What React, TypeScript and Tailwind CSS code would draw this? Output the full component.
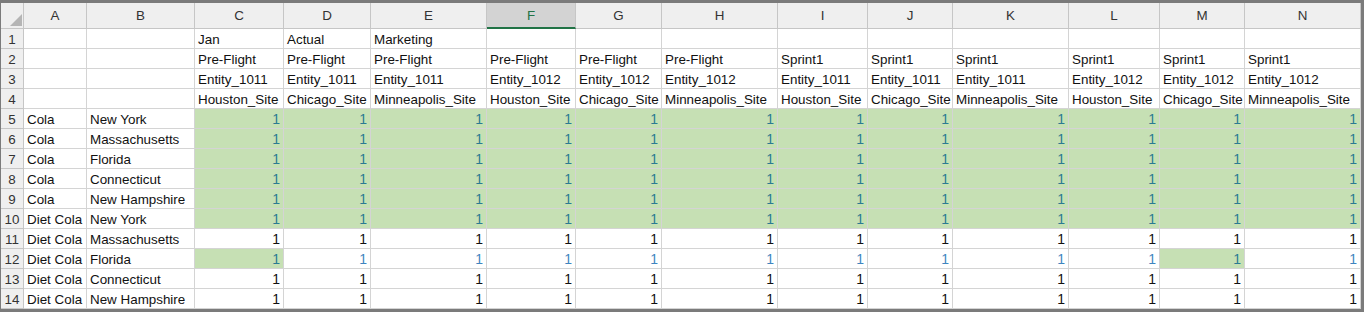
const cols = ["A", "B", "C", "D", "E", "F", "G", "H", "I", "J", "K", "L", "M", "N"];

const row1: Record<string, string> = { C: "Jan", D: "Actual", E: "Marketing" };
const scenarios = ["Pre-Flight", "Pre-Flight", "Pre-Flight", "Pre-Flight", "Pre-Flight", "Pre-Flight", "Sprint1", "Sprint1", "Sprint1", "Sprint1", "Sprint1", "Sprint1"];
const entities = ["Entity_1011", "Entity_1011", "Entity_1011", "Entity_1012", "Entity_1012", "Entity_1012", "Entity_1011", "Entity_1011", "Entity_1011", "Entity_1012", "Entity_1012", "Entity_1012"];
const sites = ["Houston_Site", "Chicago_Site", "Minneapolis_Site"];

const products = [
  ["Cola", "New York"],
  ["Cola", "Massachusetts"],
  ["Cola", "Florida"],
  ["Cola", "Connecticut"],
  ["Cola", "New Hampshire"],
  ["Diet Cola", "New York"],
  ["Diet Cola", "Massachusetts"],
  ["Diet Cola", "Florida"],
  ["Diet Cola", "Connecticut"],
  ["Diet Cola", "New Hampshire"],
];

function Cell({ children, right, fill, tone }: { children?: React.ReactNode; right?: boolean; fill?: boolean; tone?: "teal" | "blue" }) {
  const color = tone === "teal" ? "text-[#2a7a92]" : tone === "blue" ? "text-[#3f85bf]" : "text-[#111]";
  return (
    <div
      className={`h-5 flex items-end pb-[2px] px-[3px] whitespace-nowrap overflow-visible border-r border-b border-[#d4d4d4] leading-none ${right ? "justify-end text-[14px]" : "justify-start"} ${fill ? "bg-[#c6e0b4]" : "bg-white"} ${color}`}
    >
      {children}
    </div>
  );
}

function RowHead({ n }: { n: number }) {
  return (
    <div className="h-5 flex items-end justify-center pb-[2px] bg-[#efefef] border-r border-b border-[#c6c6c6] text-[#333] leading-none">
      {n}
    </div>
  );
}

export default function App() {
  return (
    <div className="w-[1364px] h-[312px] overflow-hidden bg-white border-t-[3px] border-l border-r-[3px] border-b-[3px] border-[#7b7b7b] text-[13.4px]" style={{ fontFamily: '"Liberation Sans", Arial, sans-serif' }}>
      <div className="grid grid-cols-[23px_63px_108px_89px_87px_116px_89px_86px_116px_90px_85px_116px_91px_85px_116px]">
        {/* column headers */}
        <div className="h-[26px] bg-[#efefef] border-r border-b border-[#c6c6c6] relative">
          <svg className="absolute left-[9px] top-[11px]" width="12" height="12" viewBox="0 0 12 12">
            <polygon points="12,0 12,12 0,12" fill="#b5b5b5" />
          </svg>
        </div>
        {cols.map((c) =>
          c === "F" ? (
            <div key={c} className="h-[26px] flex items-center justify-center bg-[#d3d3d3] border-r border-[#c6c6c6] border-b-2 border-b-[#217346] text-[#217346] pt-[2px]">
              {c}
            </div>
          ) : (
            <div key={c} className="h-[26px] flex items-center justify-center bg-[#efefef] border-r border-b border-[#c6c6c6] text-[#333] pt-[1px]">
              {c}
            </div>
          )
        )}

        {/* row 1 */}
        <RowHead n={1} />
        {cols.map((c) => (
          <Cell key={c}>{row1[c]}</Cell>
        ))}

        {/* row 2 */}
        <RowHead n={2} />
        <Cell />
        <Cell />
        {scenarios.map((s, i) => (
          <Cell key={i}>{s}</Cell>
        ))}

        {/* row 3 */}
        <RowHead n={3} />
        <Cell />
        <Cell />
        {entities.map((s, i) => (
          <Cell key={i}>{s}</Cell>
        ))}

        {/* row 4 */}
        <RowHead n={4} />
        <Cell />
        <Cell />
        {entities.map((_, i) => (
          <Cell key={i}>{sites[i % 3]}</Cell>
        ))}

        {/* data rows */}
        {products.map(([prod, state], r) => {
          const rowNum = r + 5;
          return [
            <RowHead key={`h${r}`} n={rowNum} />,
            <Cell key={`a${r}`}>{prod}</Cell>,
            <Cell key={`b${r}`}>{state}</Cell>,
            ...entities.map((_, i) => {
              let fill = false;
              let tone: "teal" | "blue" | undefined;
              if (rowNum <= 10) {
                fill = true;
                tone = "teal";
              } else if (rowNum === 12) {
                fill = i === 0 || i === 10;
                tone = fill ? "teal" : "blue";
              }
              return (
                <Cell key={`${r}-${i}`} right fill={fill} tone={tone}>
                  1
                </Cell>
              );
            }),
          ];
        })}
      </div>
    </div>
  );
}
